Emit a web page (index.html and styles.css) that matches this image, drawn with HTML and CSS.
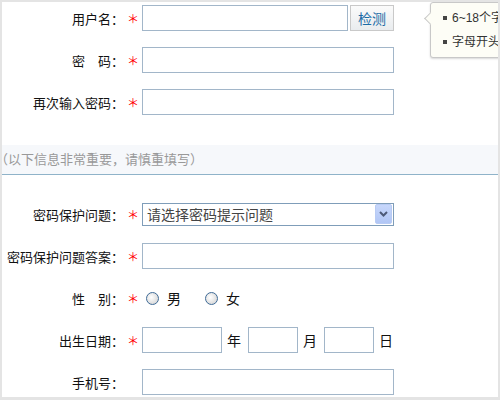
FILE: index.html
```html
<!DOCTYPE html>
<html lang="zh-CN">
<head>
  <meta charset="UTF-8" />
  <title>注册</title>
  <link rel="stylesheet" href="styles.css">
</head>
<body>

  <div class="page">
    <div class="rows">
      <div class="row">
        <span class="label">用户名：</span>
        <span class="star">＊</span>
        <input class="text short" type="text">
        <button class="check-btn">检测</button>
      </div>
      <div class="row">
        <span class="label">密　码：</span>
        <span class="star">＊</span>
        <input class="text" type="password">
      </div>
      <div class="row">
        <span class="label">再次输入密码：</span>
        <span class="star">＊</span>
        <input class="text" type="password">
      </div>
    </div>

    <div class="tip">
      <span class="tip-arrow"></span>
      <ul>
        <li><span class="dot"></span>6~18个字符</li>
        <li><span class="dot"></span>字母开头</li>
      </ul>
    </div>

    <div class="section-title">（以下信息非常重要，请慎重填写）</div>

    <div class="rows">
      <div class="row">
        <span class="label">密码保护问题：</span>
        <span class="star">＊</span>
        <div class="fake-select">
          <span class="select-text">请选择密码提示问题</span>
          <span class="select-btn">
            <svg width="9" height="6" viewBox="0 0 9 6"><path d="M1 1 L4.5 4.5 L8 1" fill="none" stroke="#4d5a78" stroke-width="2"/></svg>
          </span>
        </div>
      </div>
      <div class="row">
        <span class="label">密码保护问题答案：</span>
        <span class="star">＊</span>
        <input class="text" type="text">
      </div>
      <div class="row">
        <span class="label">性　别：</span>
        <span class="star">＊</span>
        <span class="radio"></span><span class="radio-text">男</span>
        <span class="radio"></span><span class="radio-text">女</span>
      </div>
      <div class="row">
        <span class="label">出生日期：</span>
        <span class="star">＊</span>
        <input class="text year" type="text"><span class="unit">年</span>
        <input class="text day" type="text"><span class="unit">月</span>
        <input class="text day" type="text"><span class="unit">日</span>
      </div>
      <div class="row">
        <span class="label">手机号：</span>
        <span class="star"></span>
        <input class="text" type="text">
      </div>
    </div>
  </div>

</body>
</html>
```

FILE: styles.css
```css
body {
  margin: 0;
  font-family: "Liberation Sans", "Noto Sans CJK SC", sans-serif;
  font-size: 13px;
  color: #111;
}
.page {
  position: relative;
  width: 500px;
  height: 400px;
  box-sizing: border-box;
  border: 2px solid #e4e4e4;
  border-bottom-width: 3px;
  overflow: hidden;
  background: #fff;
}
.rows {
  display: flex;
  flex-direction: column;
  gap: 16px;
}
.rows:first-child {
  padding-top: 3px;
}
.row {
  display: flex;
  align-items: center;
  height: 26px;
}
.label {
  width: 122px;
  text-align: right;
  white-space: nowrap;
}
.star {
  width: 18px;
  text-align: center;
  color: #f00;
  font-size: 12px;
  font-family: "Noto Sans CJK SC", sans-serif;
}
.text {
  box-sizing: border-box;
  width: 252px;
  height: 26px;
  margin: 0;
  border: 1px solid #a2b6c9;
  padding: 0 4px;
  font: inherit;
  background: #fff;
}
.text.short {
  width: 206px;
}
.text.year {
  width: 80px;
}
.text.day {
  width: 50px;
}
.unit {
  margin: 0 7px 0 5px;
  font-size: 14px;
}
.check-btn {
  box-sizing: border-box;
  width: 44px;
  height: 26px;
  margin: 0 0 0 2px;
  padding: 0;
  border: 1px solid #c9c9c9;
  background: linear-gradient(#fbfbfb, #e9ecef);
  color: #1c6ca6;
  font-family: "Noto Sans CJK SC", sans-serif;
  font-size: 14px;
}
.tip {
  position: absolute;
  left: 428px;
  top: 0;
  width: 100px;
  padding: 3px 0 3px 12px;
  border: 1px solid #c8c8c8;
  border-radius: 3px;
  background: #fdfdf6;
  box-shadow: 0 1px 2px #d8d8d8;
  font-size: 12px;
  color: #333;
}
.tip-arrow {
  position: absolute;
  left: -5px;
  top: 11px;
  width: 8px;
  height: 8px;
  background: #fdfdf6;
  border-left: 1px solid #c8c8c8;
  border-bottom: 1px solid #c8c8c8;
  transform: rotate(45deg);
}
.tip ul {
  list-style: none;
  margin: 0;
  padding: 0;
}
.tip li {
  height: 24px;
  line-height: 24px;
  white-space: nowrap;
  display: flex;
  align-items: center;
}
.dot {
  width: 4px;
  height: 4px;
  background: #444;
  margin-right: 5px;
}
.section-title {
  margin: 30px 0 26px;
  height: 29px;
  line-height: 29px;
  background: #f6f8fb;
  border-bottom: 1px solid #8fb3c9;
  color: #999;
  text-indent: -7px;
  white-space: nowrap;
}
.fake-select {
  box-sizing: border-box;
  width: 252px;
  height: 23px;
  border: 1px solid #7f9db9;
  display: flex;
  align-items: center;
  justify-content: space-between;
  padding: 0 1px 0 4px;
  color: #444;
  font-size: 14px;
}
.select-btn {
  width: 15px;
  height: 18px;
  border-radius: 2px;
  background: linear-gradient(#c7d7fb, #b1c6f5);
  border: 1px solid #b8cbf4;
  display: flex;
  align-items: center;
  justify-content: center;
}
.radio {
  box-sizing: border-box;
  width: 13px;
  height: 13px;
  border-radius: 50%;
  border: 1px solid #3f6b97;
  background: radial-gradient(circle at 40% 40%, #fff, #dcdcdc 70%);
  margin: 0 8px 0 4px;
}
.radio-text {
  margin-right: 20px;
  font-size: 14px;
}
```
